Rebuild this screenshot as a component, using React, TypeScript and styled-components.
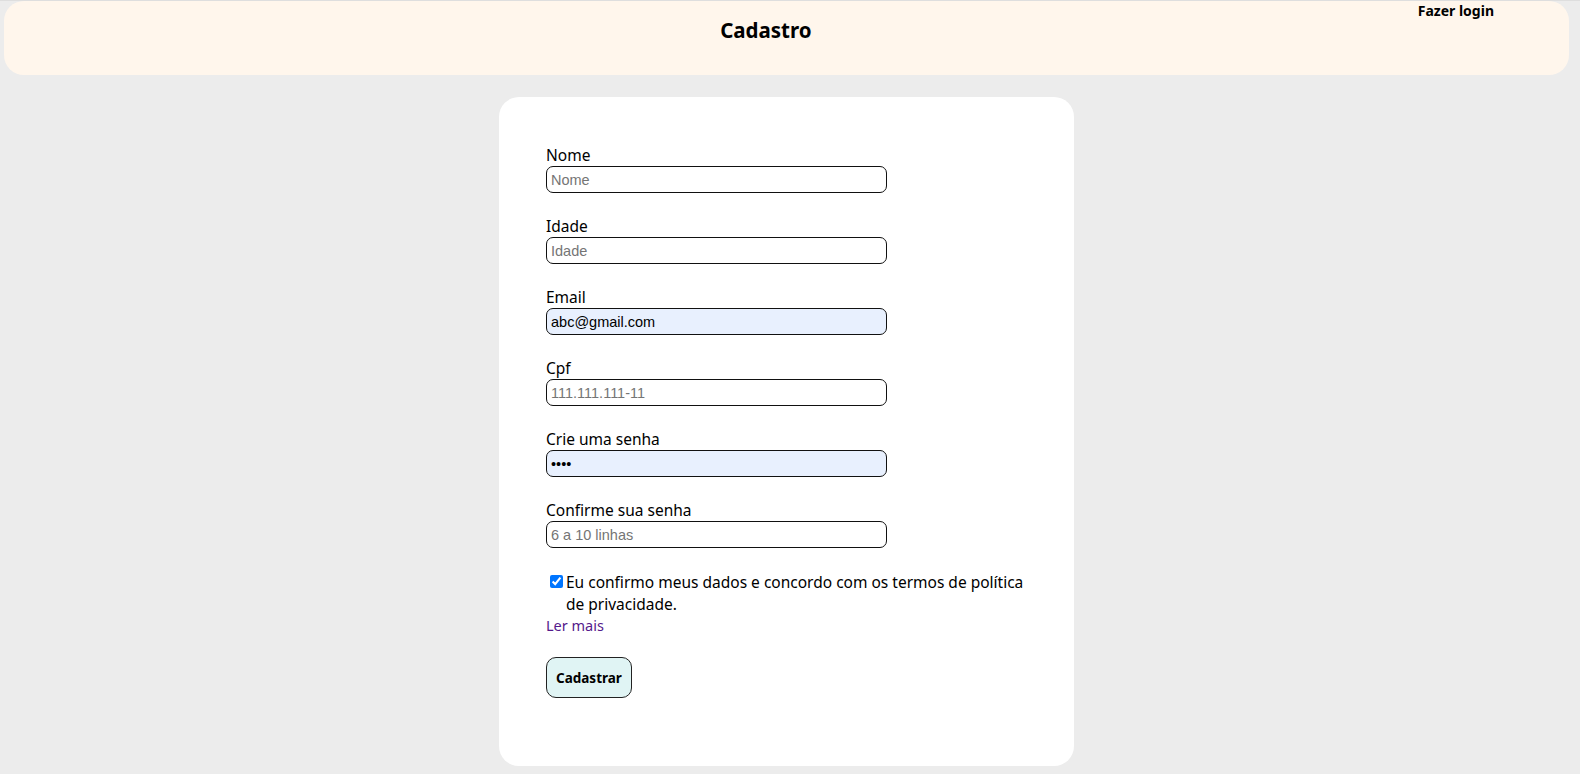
import React, { useState } from "react";
import styled, { createGlobalStyle } from "styled-components";

const GlobalStyle = createGlobalStyle`
  html, body {
    margin: 0;
    padding: 0;
    background: #ececec;
  }
  body {
    font-family: "Noto Sans", "Open Sans", sans-serif;
    color: #000;
    border-top: 1px solid #dedede;
  }
`;

const Page = styled.div`
  display: flex;
  flex-direction: column;
  align-items: stretch;
  gap: 22px;
  padding: 0 11px 20px 4px;
`;

const Header = styled.header`
  display: flex;
  align-items: flex-start;
  height: 74px;
  background: #fff6ec;
  border-radius: 20px;
`;

const HeaderTitle = styled.h1`
  flex: 1;
  margin: 0;
  padding: 14px 0 0 110px;
  text-align: center;
  font-size: 20.5px;
  line-height: 30px;
  font-weight: 700;
`;

const LoginLink = styled.a`
  margin: 0 75px 0 0;
  font-size: 14px;
  line-height: 20px;
  font-weight: 700;
  color: #000;
  text-decoration: none;
  cursor: pointer;
`;

const Card = styled.main`
  align-self: center;
  width: 575px;
  box-sizing: border-box;
  padding: 48px 48px 68px 47px;
  background: #fff;
  border-radius: 20px;
`;

const Form = styled.form`
  display: flex;
  flex-direction: column;
`;

const Field = styled.div`
  display: flex;
  flex-direction: column;
  margin-bottom: 23px;
`;

const Label = styled.label`
  font-size: 15.5px;
  line-height: 21px;
`;

const Input = styled.input<{ $filled?: boolean }>`
  width: 341px;
  height: 27px;
  box-sizing: border-box;
  padding: 0 4px;
  border: 1px solid #111;
  border-radius: 7px;
  background: ${({ $filled }) => ($filled ? "#e8f0fe" : "#fff")};
  font-family: "Liberation Sans", Arial, sans-serif;
  font-size: 14.5px;
  color: #000;
  outline: none;

  &::placeholder {
    color: #757575;
  }
`;

const ConsentRow = styled.div`
  display: flex;
  align-items: flex-start;
  margin-top: 1px;
`;

const Checkbox = styled.input`
  width: 13px;
  height: 13px;
  margin: 3px 3px 0 4px;
  flex-shrink: 0;
`;

const ConsentText = styled.label`
  font-size: 15.5px;
  line-height: 22px;
  margin-top: -1px;
`;

const ReadMore = styled.a`
  align-self: flex-start;
  font-size: 14.5px;
  line-height: 20px;
  color: #551a8b;
  text-decoration: none;
  cursor: pointer;
`;

const SubmitButton = styled.button`
  align-self: flex-start;
  margin-top: 22px;
  height: 41px;
  padding: 0 9px;
  border: 1px solid #222;
  border-radius: 10px;
  background: #e0f4f4;
  font-family: "Noto Sans", sans-serif;
  font-size: 13.5px;
  font-weight: 700;
  color: #000;
  cursor: pointer;
`;

type FieldDef = {
  label: string;
  type: string;
  placeholder: string;
  value?: string;
};

const fields: FieldDef[] = [
  { label: "Nome", type: "text", placeholder: "Nome" },
  { label: "Idade", type: "text", placeholder: "Idade" },
  { label: "Email", type: "email", placeholder: "Email", value: "abc@gmail.com" },
  { label: "Cpf", type: "text", placeholder: "111.111.111-11" },
  { label: "Crie uma senha", type: "password", placeholder: "", value: "1234" },
  { label: "Confirme sua senha", type: "password", placeholder: "6 a 10 linhas" },
];

const App: React.FC = () => {
  const [values, setValues] = useState<Record<string, string>>(() =>
    Object.fromEntries(fields.map((f) => [f.label, f.value ?? ""]))
  );
  const [agreed, setAgreed] = useState(true);

  return (
    <>
      <GlobalStyle />
      <Page>
        <Header>
          <HeaderTitle>Cadastro</HeaderTitle>
          <LoginLink>Fazer login</LoginLink>
        </Header>

        <Card>
          <Form onSubmit={(e) => e.preventDefault()}>
            {fields.map((f, i) => (
              <Field key={f.label}>
                <Label htmlFor={`f${i}`}>{f.label}</Label>
                <Input
                  id={`f${i}`}
                  type={f.type}
                  placeholder={f.placeholder}
                  value={values[f.label]}
                  $filled={!!f.value}
                  onChange={(e) => setValues({ ...values, [f.label]: e.target.value })}
                />
              </Field>
            ))}

            <ConsentRow>
              <Checkbox
                id="consent"
                type="checkbox"
                checked={agreed}
                onChange={(e) => setAgreed(e.target.checked)}
              />
              <ConsentText htmlFor="consent">
                Eu confirmo meus dados e concordo com os termos de política de privacidade.
              </ConsentText>
            </ConsentRow>
            <ReadMore>Ler mais</ReadMore>

            <SubmitButton type="submit">Cadastrar</SubmitButton>
          </Form>
        </Card>
      </Page>
    </>
  );
};

export default App;
